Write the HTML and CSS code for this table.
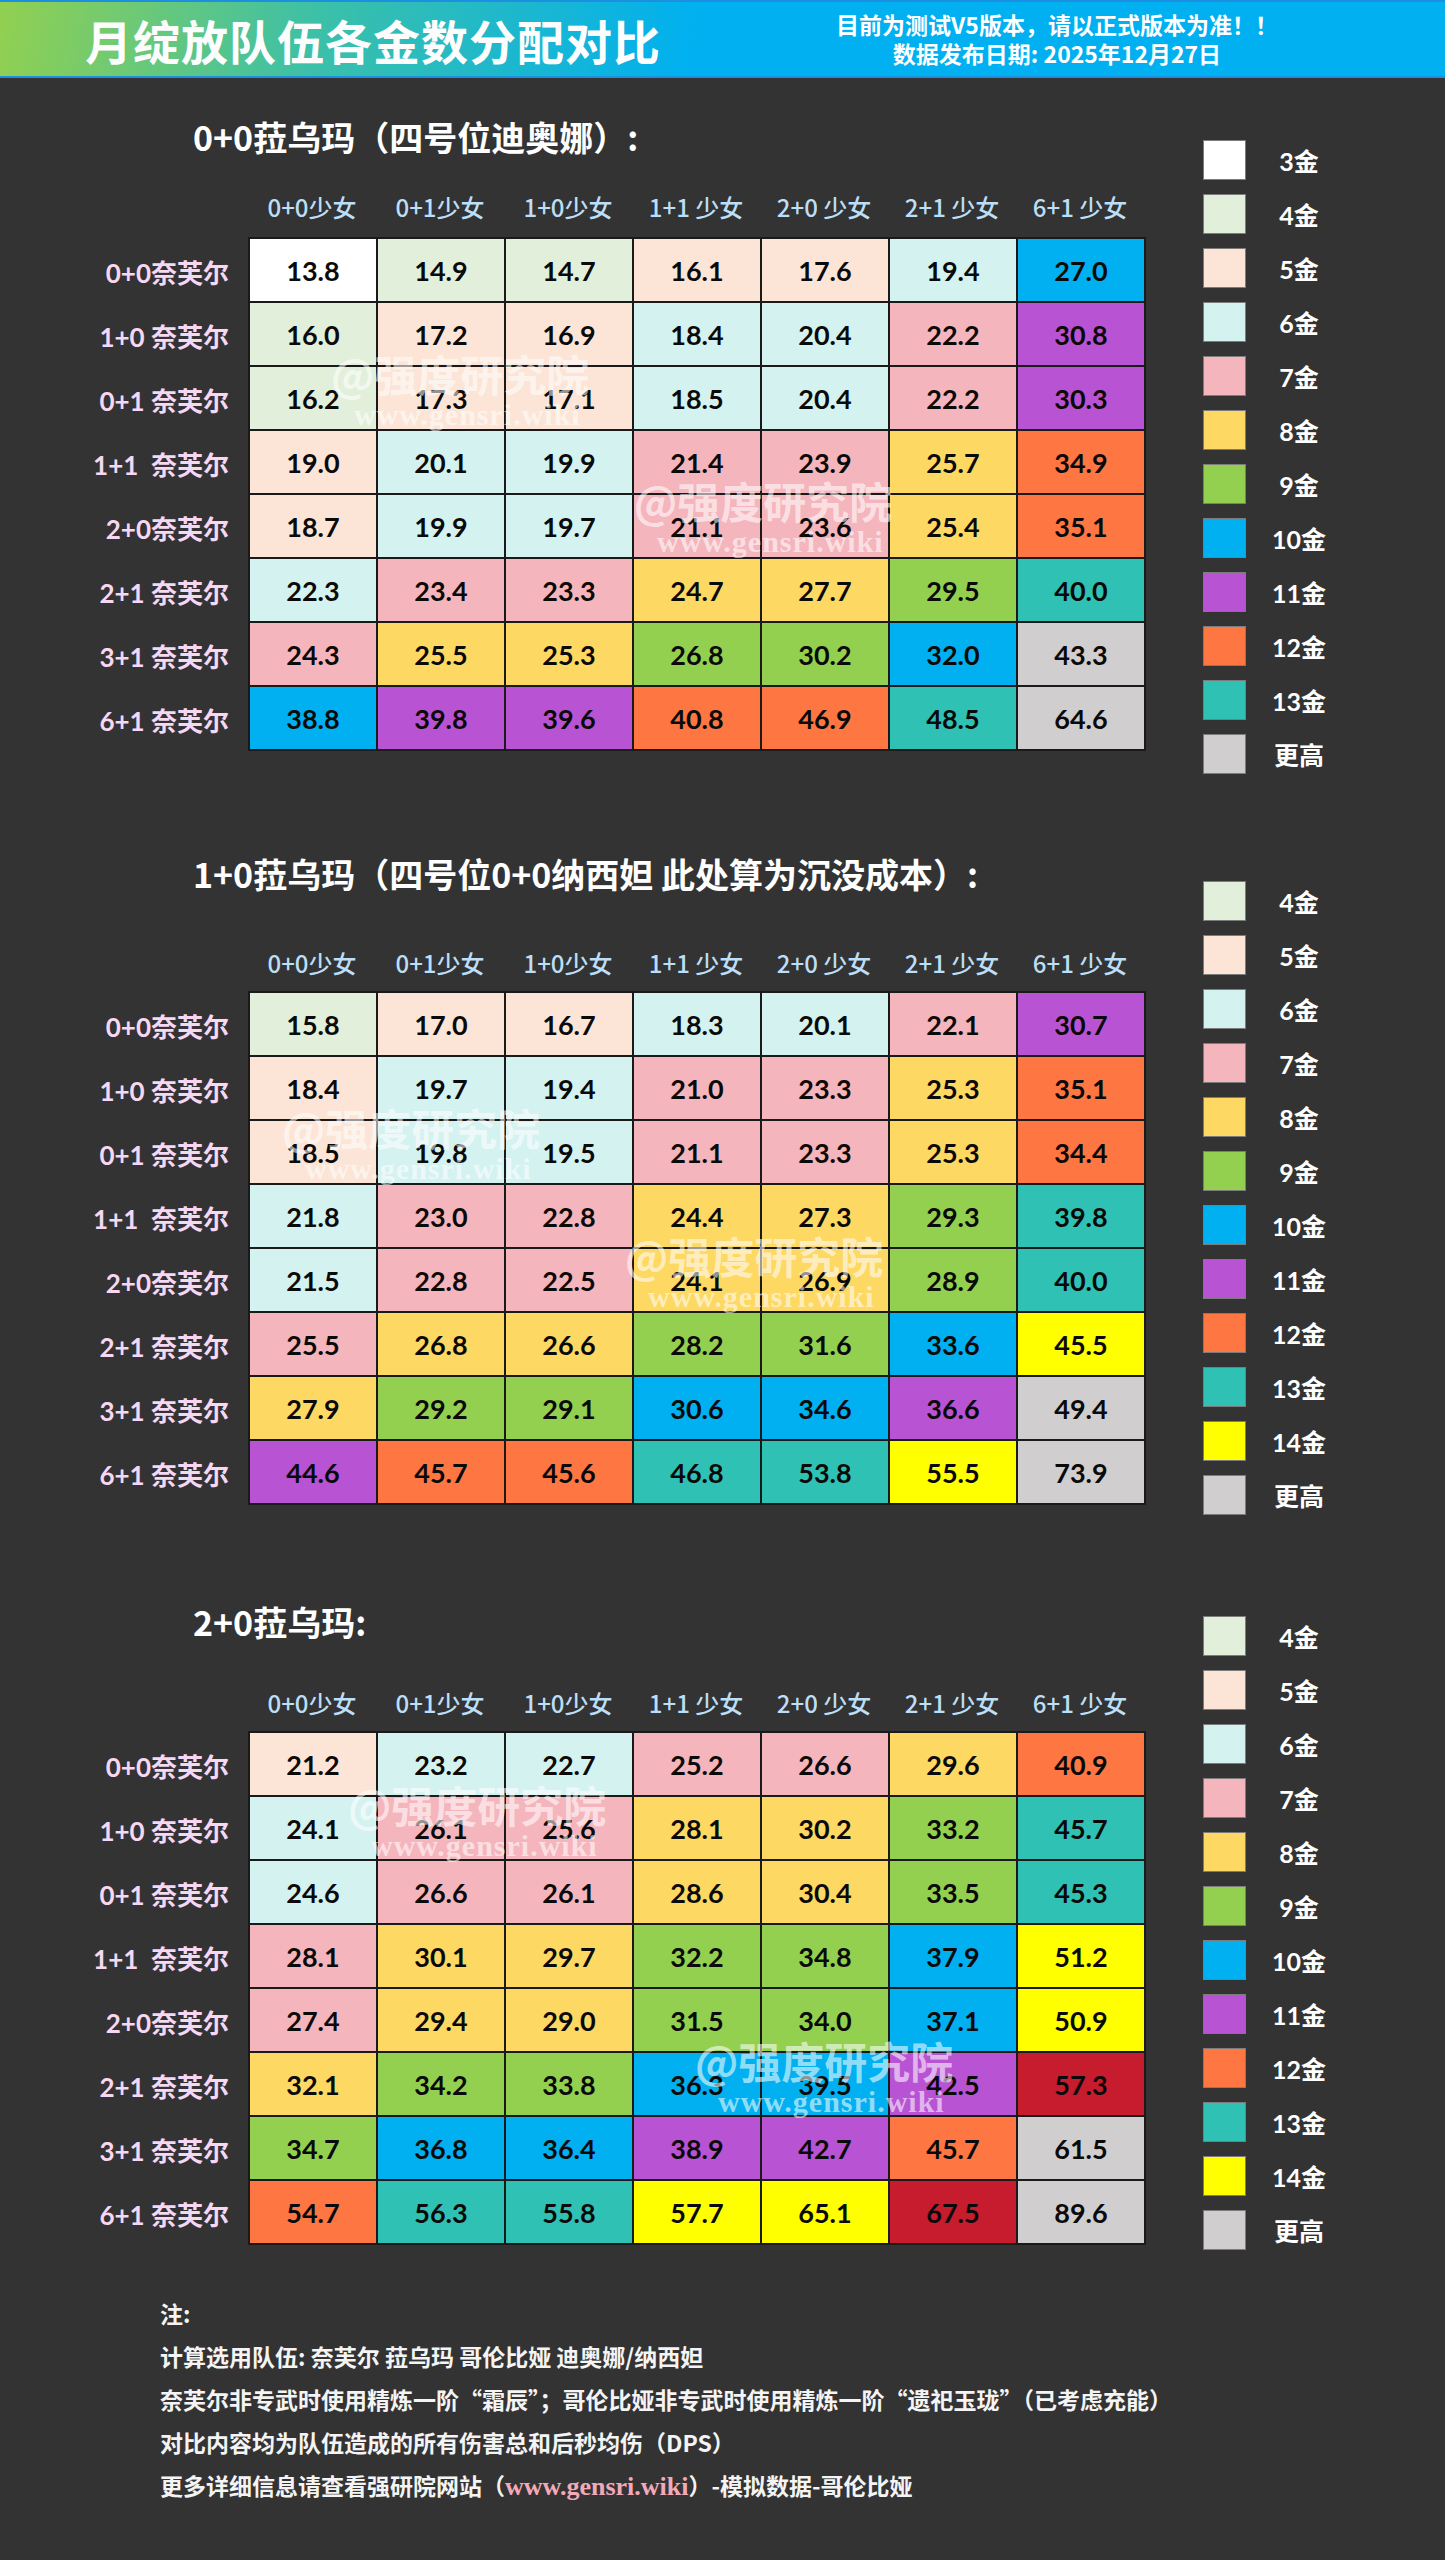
FILE: index.html
```html
<!DOCTYPE html>
<html lang="zh-CN">
<head>
<meta charset="utf-8">
<title>月绽放队伍各金数分配对比</title>
<link rel="stylesheet" href="styles.css">
</head>
<body>
<div class="page">
  <header class="top">
    <h1 class="top-title">月绽放队伍各金数分配对比</h1>
    <div class="top-note">
      <div>目前为测试V5版本，请以正式版本为准！！</div>
      <div>数据发布日期: 2025年12月27日</div>
    </div>
  </header>

  <section class="sec sec1">
    <div class="main">
      <h2 class="sec-title">0+0菈乌玛（四号位迪奥娜）:</h2>
      <div class="colheads">
        <span>0+0少女</span><span>0+1少女</span><span>1+0少女</span><span>1+1 少女</span><span>2+0 少女</span><span>2+1 少女</span><span>6+1 少女</span>
      </div>
      <div class="tablerow">
        <div class="rowlabels">
          <div class="rl">0+0奈芙尔</div><div class="rl">1+0 奈芙尔</div><div class="rl">0+1 奈芙尔</div><div class="rl">1+1  奈芙尔</div><div class="rl">2+0奈芙尔</div><div class="rl">2+1 奈芙尔</div><div class="rl">3+1 奈芙尔</div><div class="rl">6+1 奈芙尔</div>
        </div>
        <div class="grid">
          <div class="g3">13.8</div><div class="g4">14.9</div><div class="g4">14.7</div><div class="g5">16.1</div><div class="g5">17.6</div><div class="g6">19.4</div><div class="g10">27.0</div>
          <div class="g4">16.0</div><div class="g5">17.2</div><div class="g5">16.9</div><div class="g6">18.4</div><div class="g6">20.4</div><div class="g7">22.2</div><div class="g11">30.8</div>
          <div class="g4">16.2</div><div class="g5">17.3</div><div class="g5">17.1</div><div class="g6">18.5</div><div class="g6">20.4</div><div class="g7">22.2</div><div class="g11">30.3</div>
          <div class="g5">19.0</div><div class="g6">20.1</div><div class="g6">19.9</div><div class="g7">21.4</div><div class="g7">23.9</div><div class="g8">25.7</div><div class="g12">34.9</div>
          <div class="g5">18.7</div><div class="g6">19.9</div><div class="g6">19.7</div><div class="g7">21.1</div><div class="g7">23.6</div><div class="g8">25.4</div><div class="g12">35.1</div>
          <div class="g6">22.3</div><div class="g7">23.4</div><div class="g7">23.3</div><div class="g8">24.7</div><div class="g8">27.7</div><div class="g9">29.5</div><div class="g13">40.0</div>
          <div class="g7">24.3</div><div class="g8">25.5</div><div class="g8">25.3</div><div class="g9">26.8</div><div class="g9">30.2</div><div class="g10">32.0</div><div class="gx">43.3</div>
          <div class="g10">38.8</div><div class="g11">39.8</div><div class="g11">39.6</div><div class="g12">40.8</div><div class="g12">46.9</div><div class="g13">48.5</div><div class="gx">64.6</div>
        </div>
      </div>
    </div>
    <div class="legend">
      <div class="li"><span class="sw g3"></span><span class="ll">3金</span></div>
      <div class="li"><span class="sw g4"></span><span class="ll">4金</span></div>
      <div class="li"><span class="sw g5"></span><span class="ll">5金</span></div>
      <div class="li"><span class="sw g6"></span><span class="ll">6金</span></div>
      <div class="li"><span class="sw g7"></span><span class="ll">7金</span></div>
      <div class="li"><span class="sw g8"></span><span class="ll">8金</span></div>
      <div class="li"><span class="sw g9"></span><span class="ll">9金</span></div>
      <div class="li"><span class="sw g10"></span><span class="ll">10金</span></div>
      <div class="li"><span class="sw g11"></span><span class="ll">11金</span></div>
      <div class="li"><span class="sw g12"></span><span class="ll">12金</span></div>
      <div class="li"><span class="sw g13"></span><span class="ll">13金</span></div>
      <div class="li"><span class="sw gx"></span><span class="ll">更高</span></div>
    </div>
  </section>

  <section class="sec sec2">
    <div class="main">
      <h2 class="sec-title">1+0菈乌玛（四号位0+0纳西妲 此处算为沉没成本）:</h2>
      <div class="colheads">
        <span>0+0少女</span><span>0+1少女</span><span>1+0少女</span><span>1+1 少女</span><span>2+0 少女</span><span>2+1 少女</span><span>6+1 少女</span>
      </div>
      <div class="tablerow">
        <div class="rowlabels">
          <div class="rl">0+0奈芙尔</div><div class="rl">1+0 奈芙尔</div><div class="rl">0+1 奈芙尔</div><div class="rl">1+1  奈芙尔</div><div class="rl">2+0奈芙尔</div><div class="rl">2+1 奈芙尔</div><div class="rl">3+1 奈芙尔</div><div class="rl">6+1 奈芙尔</div>
        </div>
        <div class="grid">
          <div class="g4">15.8</div><div class="g5">17.0</div><div class="g5">16.7</div><div class="g6">18.3</div><div class="g6">20.1</div><div class="g7">22.1</div><div class="g11">30.7</div>
          <div class="g5">18.4</div><div class="g6">19.7</div><div class="g6">19.4</div><div class="g7">21.0</div><div class="g7">23.3</div><div class="g8">25.3</div><div class="g12">35.1</div>
          <div class="g5">18.5</div><div class="g6">19.8</div><div class="g6">19.5</div><div class="g7">21.1</div><div class="g7">23.3</div><div class="g8">25.3</div><div class="g12">34.4</div>
          <div class="g6">21.8</div><div class="g7">23.0</div><div class="g7">22.8</div><div class="g8">24.4</div><div class="g8">27.3</div><div class="g9">29.3</div><div class="g13">39.8</div>
          <div class="g6">21.5</div><div class="g7">22.8</div><div class="g7">22.5</div><div class="g8">24.1</div><div class="g8">26.9</div><div class="g9">28.9</div><div class="g13">40.0</div>
          <div class="g7">25.5</div><div class="g8">26.8</div><div class="g8">26.6</div><div class="g9">28.2</div><div class="g9">31.6</div><div class="g10">33.6</div><div class="g14">45.5</div>
          <div class="g8">27.9</div><div class="g9">29.2</div><div class="g9">29.1</div><div class="g10">30.6</div><div class="g10">34.6</div><div class="g11">36.6</div><div class="gx">49.4</div>
          <div class="g11">44.6</div><div class="g12">45.7</div><div class="g12">45.6</div><div class="g13">46.8</div><div class="g13">53.8</div><div class="g14">55.5</div><div class="gx">73.9</div>
        </div>
      </div>
    </div>
    <div class="legend">
      <div class="li"><span class="sw g4"></span><span class="ll">4金</span></div>
      <div class="li"><span class="sw g5"></span><span class="ll">5金</span></div>
      <div class="li"><span class="sw g6"></span><span class="ll">6金</span></div>
      <div class="li"><span class="sw g7"></span><span class="ll">7金</span></div>
      <div class="li"><span class="sw g8"></span><span class="ll">8金</span></div>
      <div class="li"><span class="sw g9"></span><span class="ll">9金</span></div>
      <div class="li"><span class="sw g10"></span><span class="ll">10金</span></div>
      <div class="li"><span class="sw g11"></span><span class="ll">11金</span></div>
      <div class="li"><span class="sw g12"></span><span class="ll">12金</span></div>
      <div class="li"><span class="sw g13"></span><span class="ll">13金</span></div>
      <div class="li"><span class="sw g14"></span><span class="ll">14金</span></div>
      <div class="li"><span class="sw gx"></span><span class="ll">更高</span></div>
    </div>
  </section>

  <section class="sec sec3">
    <div class="main">
      <h2 class="sec-title">2+0菈乌玛:</h2>
      <div class="colheads">
        <span>0+0少女</span><span>0+1少女</span><span>1+0少女</span><span>1+1 少女</span><span>2+0 少女</span><span>2+1 少女</span><span>6+1 少女</span>
      </div>
      <div class="tablerow">
        <div class="rowlabels">
          <div class="rl">0+0奈芙尔</div><div class="rl">1+0 奈芙尔</div><div class="rl">0+1 奈芙尔</div><div class="rl">1+1  奈芙尔</div><div class="rl">2+0奈芙尔</div><div class="rl">2+1 奈芙尔</div><div class="rl">3+1 奈芙尔</div><div class="rl">6+1 奈芙尔</div>
        </div>
        <div class="grid">
          <div class="g5">21.2</div><div class="g6">23.2</div><div class="g6">22.7</div><div class="g7">25.2</div><div class="g7">26.6</div><div class="g8">29.6</div><div class="g12">40.9</div>
          <div class="g6">24.1</div><div class="g7">26.1</div><div class="g7">25.6</div><div class="g8">28.1</div><div class="g8">30.2</div><div class="g9">33.2</div><div class="g13">45.7</div>
          <div class="g6">24.6</div><div class="g7">26.6</div><div class="g7">26.1</div><div class="g8">28.6</div><div class="g8">30.4</div><div class="g9">33.5</div><div class="g13">45.3</div>
          <div class="g7">28.1</div><div class="g8">30.1</div><div class="g8">29.7</div><div class="g9">32.2</div><div class="g9">34.8</div><div class="g10">37.9</div><div class="g14">51.2</div>
          <div class="g7">27.4</div><div class="g8">29.4</div><div class="g8">29.0</div><div class="g9">31.5</div><div class="g9">34.0</div><div class="g10">37.1</div><div class="g14">50.9</div>
          <div class="g8">32.1</div><div class="g9">34.2</div><div class="g9">33.8</div><div class="g10">36.3</div><div class="g10">39.5</div><div class="g11">42.5</div><div class="gr">57.3</div>
          <div class="g9">34.7</div><div class="g10">36.8</div><div class="g10">36.4</div><div class="g11">38.9</div><div class="g11">42.7</div><div class="g12">45.7</div><div class="gx">61.5</div>
          <div class="g12">54.7</div><div class="g13">56.3</div><div class="g13">55.8</div><div class="g14">57.7</div><div class="g14">65.1</div><div class="gr">67.5</div><div class="gx">89.6</div>
        </div>
      </div>
    </div>
    <div class="legend">
      <div class="li"><span class="sw g4"></span><span class="ll">4金</span></div>
      <div class="li"><span class="sw g5"></span><span class="ll">5金</span></div>
      <div class="li"><span class="sw g6"></span><span class="ll">6金</span></div>
      <div class="li"><span class="sw g7"></span><span class="ll">7金</span></div>
      <div class="li"><span class="sw g8"></span><span class="ll">8金</span></div>
      <div class="li"><span class="sw g9"></span><span class="ll">9金</span></div>
      <div class="li"><span class="sw g10"></span><span class="ll">10金</span></div>
      <div class="li"><span class="sw g11"></span><span class="ll">11金</span></div>
      <div class="li"><span class="sw g12"></span><span class="ll">12金</span></div>
      <div class="li"><span class="sw g13"></span><span class="ll">13金</span></div>
      <div class="li"><span class="sw g14"></span><span class="ll">14金</span></div>
      <div class="li"><span class="sw gx"></span><span class="ll">更高</span></div>
    </div>
  </section>

  <footer class="notes">
    <p>注:</p>
    <p>计算选用队伍: 奈芙尔 菈乌玛 哥伦比娅 迪奥娜/纳西妲</p>
    <p>奈芙尔非专武时使用精炼一阶“霜辰”；哥伦比娅非专武时使用精炼一阶“遗祀玉珑”（已考虑充能）</p>
    <p>对比内容均为队伍造成的所有伤害总和后秒均伤（DPS）</p>
    <p>更多详细信息请查看强研院网站（<span class="url">www.gensri.wiki</span>）-模拟数据-哥伦比娅</p>
  </footer>

  <div class="wm wm1"><div class="wm-a">@强度研究院</div><div class="wm-b">www.gensri.wiki</div></div>
  <div class="wm wm2"><div class="wm-a">@强度研究院</div><div class="wm-b">www.gensri.wiki</div></div>
  <div class="wm wm3"><div class="wm-a">@强度研究院</div><div class="wm-b">www.gensri.wiki</div></div>
  <div class="wm wm4"><div class="wm-a">@强度研究院</div><div class="wm-b">www.gensri.wiki</div></div>
  <div class="wm wm5"><div class="wm-a">@强度研究院</div><div class="wm-b">www.gensri.wiki</div></div>
  <div class="wm wm6"><div class="wm-a">@强度研究院</div><div class="wm-b">www.gensri.wiki</div></div>
</div>
</body>
</html>
```

FILE: styles.css
```css
html, body {
  margin: 0;
  padding: 0;
  background: #333333;
}
.page {
  position: relative;
  width: 1445px;
  min-height: 2560px;
  background: #333333;
  font-family: "Noto Sans CJK SC", "Noto Sans", sans-serif;
  color: #fff;
  overflow: hidden;
}

/* header */
.top {
  height: 74px;
  border-top: 2px solid #1c8fe0;
  border-bottom: 2px solid #1c8fe0;
  background: linear-gradient(100deg, #92d050 0%, #3cc0a8 22%, #00b0f0 48%, #00b0f0 100%);
  display: flex;
  align-items: center;
  padding-left: 85px;
  padding-right: 128px;
}
.top-title {
  margin: 0;
  font-size: 47px;
  font-weight: 700;
  letter-spacing: 1px;
  color: #fdfdfd;
  line-height: 1;
}
.top-note {
  margin-left: auto;
  width: 520px;
  text-align: center;
  font-size: 23px;
  font-weight: 700;
  line-height: 29px;
  color: #fff;
}

/* sections */
.sec {
  display: flex;
  align-items: flex-start;
}
.sec1 { padding-top: 35px; }
.sec2 { padding-top: 76px; }
.sec3 { padding-top: 83px; }

.main {
  width: 1146px;
}
.sec-title {
  margin: 0 0 0 193px;
  font-size: 34px;
  line-height: 48px;
  font-weight: 700;
  color: #fff;
  white-space: nowrap;
}
.colheads {
  display: flex;
  margin-left: 248px;
  height: 30px;
  line-height: 30px;
  font-size: 24px;
  font-weight: 500;
  color: #bcdff7;
}
.sec1 .colheads { margin-top: 31px; margin-bottom: 15px; }
.sec2 .colheads { margin-top: 50px; margin-bottom: 13px; }
.sec3 .colheads { margin-top: 42px; margin-bottom: 13px; }
.colheads span {
  width: 128px;
  text-align: center;
  white-space: pre;
}

.tablerow {
  display: flex;
}
.rowlabels {
  width: 248px;
  padding-top: 2px;
  box-sizing: border-box;
}
.rl {
  height: 64px;
  display: flex;
  align-items: center;
  justify-content: flex-end;
  padding-right: 19px;
  font-family: "Lato", "Noto Sans CJK SC", sans-serif;
  font-size: 26px;
  font-weight: 700;
  color: #f6d8f4;
  white-space: pre;
}
.grid {
  display: grid;
  grid-template-columns: repeat(7, 126px);
  grid-auto-rows: 62px;
  gap: 2px;
  background: #1a1a1a;
  border: 2px solid #1a1a1a;
}
.grid div {
  display: flex;
  align-items: center;
  justify-content: center;
  font-family: "Lato", "Noto Sans", sans-serif;
  font-size: 27px;
  font-weight: 700;
  color: #0a0a0a;
}

/* legend */
.legend {
  margin-left: 57px;
  display: flex;
  flex-direction: column;
  gap: 14px;
}
.sec1 .legend { margin-top: 27px; }
.sec2 .legend { margin-top: 31px; }
.sec3 .legend { margin-top: 18px; }
.li {
  display: flex;
  align-items: center;
  height: 40px;
}
.sw {
  width: 43px;
  height: 40px;
  box-sizing: border-box;
  border: 1px solid #7c7c7c;
}
.ll {
  width: 106px;
  text-align: center;
  font-family: "Lato", "Noto Sans CJK SC", sans-serif;
  font-size: 25px;
  font-weight: 700;
  color: #fff;
}

/* colours */
.g3 { background: #ffffff; }
.g4 { background: #e2efda; }
.g5 { background: #fce5d6; }
.g6 { background: #d4f2f0; }
.g7 { background: #f4b5bd; }
.g8 { background: #fdd862; }
.g9 { background: #93d04f; }
.g10 { background: #00b0f0; }
.g11 { background: #b853d4; }
.g12 { background: #fe7642; }
.g13 { background: #2fc2b4; }
.g14 { background: #ffff00; }
.gx { background: #d0cece; }
.gr { background: #c71b2e; }

/* notes */
.notes {
  margin-top: 42px;
  padding-left: 160px;
}
.notes p {
  margin: 0;
  height: 43px;
  line-height: 43px;
  font-size: 23px;
  font-weight: 700;
  color: #f4f4f4;
  white-space: nowrap;
}
.url {
  font-family: "Liberation Serif", serif;
  font-size: 26px;
  color: #f2a9b8;
}

/* watermarks */
.wm {
  position: absolute;
  color: rgba(255, 255, 255, 0.58);
  pointer-events: none;
  white-space: nowrap;
}
.wm-a {
  font-family: "Noto Sans CJK SC", sans-serif;
  font-size: 43px;
  font-weight: 700;
  line-height: 50px;
}
.wm-b {
  margin-left: 23px;
  font-family: "Liberation Serif", serif;
  font-size: 30px;
  font-weight: 700;
  line-height: 34px;
  letter-spacing: 1px;
}
.wm1 { left: 331px; top: 348px; }
.wm2 { left: 634px; top: 475px; }
.wm3 { left: 282px; top: 1102px; }
.wm4 { left: 625px; top: 1230px; }
.wm5 { left: 348px; top: 1779px; }
.wm6 { left: 695px; top: 2035px; }
```
